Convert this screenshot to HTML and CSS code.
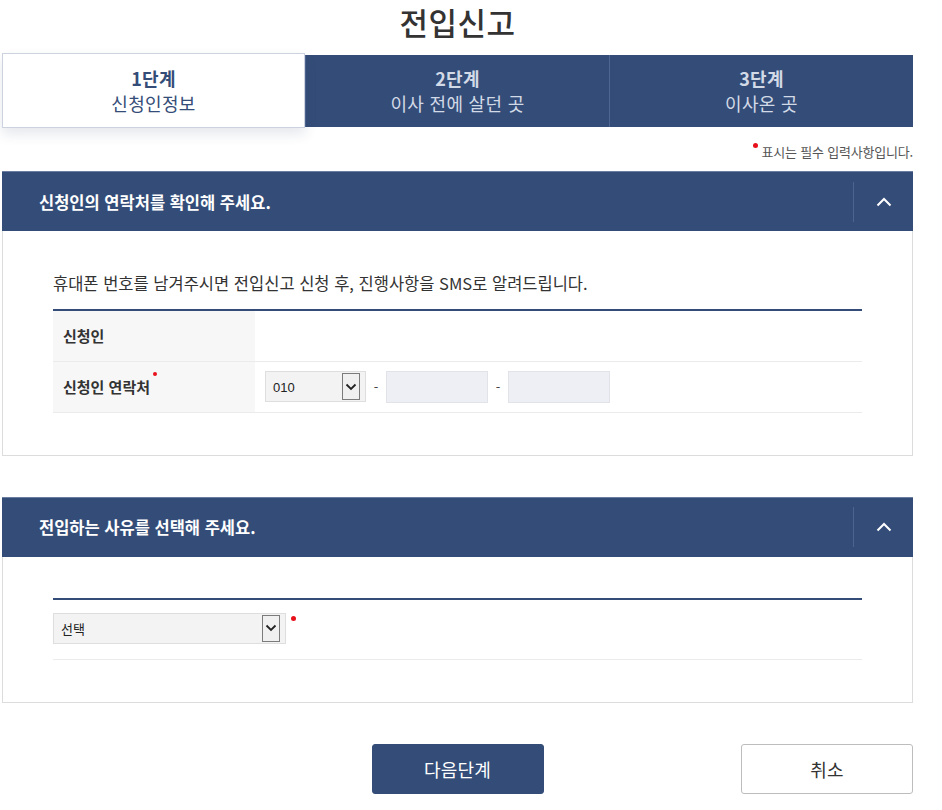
FILE: index.html
```html
<!DOCTYPE html>
<html lang="ko">
<head>
<meta charset="utf-8">
<title>전입신고</title>
<link rel="stylesheet" href="styles.css">
</head>
<body>
<div class="page">
  <h1 class="title">전입신고</h1>

  <ol class="steps">
    <li class="step active"><strong>1단계</strong><span>신청인정보</span></li>
    <li class="step"><strong>2단계</strong><span>이사 전에 살던 곳</span></li>
    <li class="step"><strong>3단계</strong><span>이사온 곳</span></li>
  </ol>

  <p class="req-note"><i class="dot"></i>표시는 필수 입력사항입니다.</p>

  <section class="panel">
    <header class="panel-head">
      <h2>신청인의 연락처를 확인해 주세요.</h2>
      <button class="toggle" type="button" aria-label="접기">
        <svg width="16" height="10" viewBox="0 0 16 10"><path d="M1.5 8.5 L8 2 L14.5 8.5" fill="none" stroke="#fff" stroke-width="2"/></svg>
      </button>
    </header>
    <div class="panel-body">
      <p class="lead">휴대폰 번호를 남겨주시면 전입신고 신청 후, 진행사항을 SMS로 알려드립니다.</p>
      <table class="form-table">
        <tr>
          <th>신청인</th>
          <td></td>
        </tr>
        <tr>
          <th>신청인 연락처<i class="dot sup"></i></th>
          <td>
            <div class="phone">
              <div class="select short"><span class="val">010</span><span class="arrow"><svg width="12" height="8" viewBox="0 0 12 8"><path d="M1.5 1.5 L6 6 L10.5 1.5" fill="none" stroke="#222" stroke-width="1.8"/></svg></span></div>
              <span class="dash">-</span>
              <span class="input"></span>
              <span class="dash">-</span>
              <span class="input"></span>
            </div>
          </td>
        </tr>
      </table>
    </div>
  </section>

  <section class="panel second">
    <header class="panel-head">
      <h2>전입하는 사유를 선택해 주세요.</h2>
      <button class="toggle" type="button" aria-label="접기">
        <svg width="16" height="10" viewBox="0 0 16 10"><path d="M1.5 8.5 L8 2 L14.5 8.5" fill="none" stroke="#fff" stroke-width="2"/></svg>
      </button>
    </header>
    <div class="panel-body reason">
      <div class="reason-row">
        <div class="select wide"><span class="val ko">선택</span><span class="arrow"><svg width="12" height="8" viewBox="0 0 12 8"><path d="M1.5 1.5 L6 6 L10.5 1.5" fill="none" stroke="#222" stroke-width="1.8"/></svg></span></div>
        <i class="dot"></i>
      </div>
    </div>
  </section>

  <div class="actions">
    <button class="btn primary" type="button">다음단계</button>
    <button class="btn ghost" type="button">취소</button>
  </div>
</div>
</body>
</html>
```

FILE: styles.css
```css
* { box-sizing: border-box; }
html, body { margin: 0; padding: 0; background: #fff; }
body {
  font-family: "Noto Sans CJK KR", "Noto Sans", sans-serif;
  color: #333;
}
.page {
  width: 911px;
  margin-left: 2px;
}
.title {
  margin: 0;
  height: 53px;
  text-align: center;
  font-size: 31px;
  font-weight: 500;
  line-height: 44px;
  color: #333;
  letter-spacing: 0.5px;
}
.steps {
  list-style: none;
  margin: 0;
  padding: 0;
  display: grid;
  grid-template-columns: 303px 304px 304px;
  height: 74px;
}
.step {
  margin-top: 2px;
  height: 72px;
  background: #344d78;
  color: #d3dae7;
  display: flex;
  flex-direction: column;
  align-items: center;
  justify-content: center;
  font-size: 18px;
  line-height: 25px;
  letter-spacing: 0.3px;
}
.step + .step { border-left: 1px solid #4f6591; }
.step strong { font-weight: 700; }
.step span { font-weight: 400; }
.step.active {
  margin-top: 0;
  height: 75px;
  background: #fff;
  color: #344d78;
  border: 1px solid #ccd3df;
  box-shadow: 0 6px 12px rgba(40, 60, 100, 0.12);
  position: relative;
  z-index: 1;
}
.req-note {
  margin: 12px 0 0;
  height: 32px;
  padding-top: 4px;
  text-align: right;
  font-size: 13px;
  line-height: 18px;
  color: #555;
  letter-spacing: -0.2px;
}
.dot {
  display: inline-block;
  width: 5px;
  height: 5px;
  border-radius: 50%;
  background: #e8101a;
  vertical-align: top;
  margin: 0 4px 0 0;
}
.panel {
  border: 1px solid #dcdcdc;
  border-top: 0;
}
.panel.second { margin-top: 41px; }
.panel-head {
  height: 60px;
  margin: 0 -1px;
  background: #344d78;
  display: flex;
  align-items: center;
  justify-content: space-between;
  padding-left: 37px;
  border-top: 1px solid #6b7ea1;
}
.panel-head h2 {
  margin: 0;
  font-size: 16.5px;
  font-weight: 700;
  color: #fff;
  letter-spacing: 0;
}
.toggle {
  width: 60px;
  height: 40px;
  border: 0;
  border-left: 1px solid #4d6390;
  background: transparent;
  display: flex;
  align-items: center;
  justify-content: center;
  padding: 0;
}
.panel-body {
  padding: 40px 50px 42px;
}
.lead {
  margin: 0 0 14px;
  font-size: 16.5px;
  line-height: 24px;
  color: #333;
  letter-spacing: 0;
}
.form-table {
  width: 100%;
  border-collapse: collapse;
  border-top: 2px solid #344d78;
}
.form-table th, .form-table td {
  height: 51px;
  border-bottom: 1px solid #ebebeb;
  padding: 0;
}
.form-table th {
  width: 202px;
  background: #f7f7f7;
  text-align: left;
  padding-left: 10px;
  font-size: 15px;
  font-weight: 700;
  color: #333;
  letter-spacing: 0;
}
.form-table th .dot.sup {
  width: 4px;
  height: 4px;
  margin: -4px 0 0 3px;
}
.form-table td { padding-left: 10px; }
.phone {
  display: flex;
  align-items: center;
}
.select {
  display: flex;
  align-items: center;
  justify-content: space-between;
  height: 31px;
  background: #f3f3f3;
  border: 1px solid #dedede;
  padding: 0 5px 0 7px;
}
.select.short { width: 101px; }
.select.wide { width: 233px; }
.select .val {
  font-family: "Liberation Sans", Arial, sans-serif;
  font-size: 13px;
  color: #222;
  padding-top: 2px;
}
.select .val.ko {
  font-family: "Noto Sans CJK KR", sans-serif;
  font-size: 13px;
  padding-top: 0;
}
.arrow {
  width: 18px;
  height: 27px;
  border: 1px solid #7b7b7b;
  background: #f0f0f0;
  display: flex;
  align-items: center;
  justify-content: center;
}
.dash {
  width: 20px;
  text-align: center;
  font-size: 13px;
  color: #444;
}
.input {
  display: block;
  width: 102px;
  height: 32px;
  background: #eeeff4;
  border: 1px solid #e2e3e8;
}
.reason { padding-top: 41px; }
.reason-row {
  border-top: 2px solid #344d78;
  border-bottom: 1px solid #ebebeb;
  height: 62px;
  padding-top: 13px;
  display: flex;
  align-items: flex-start;
}
.reason-row .dot {
  margin: 3px 0 0 5px;
}
.actions {
  margin-top: 41px;
  display: grid;
  grid-template-columns: 1fr auto 1fr;
  align-items: center;
}
.btn {
  width: 172px;
  height: 50px;
  border-radius: 3px;
  font-family: "Noto Sans CJK KR", sans-serif;
  font-size: 18px;
  letter-spacing: 0.2px;
  cursor: pointer;
}
.btn.primary {
  grid-column: 2;
  background: #344d78;
  color: #fff;
  border: 1px solid #344d78;
}
.btn.ghost {
  grid-column: 3;
  justify-self: end;
  background: #fff;
  color: #333;
  border: 1px solid #bdbdbd;
}
```
